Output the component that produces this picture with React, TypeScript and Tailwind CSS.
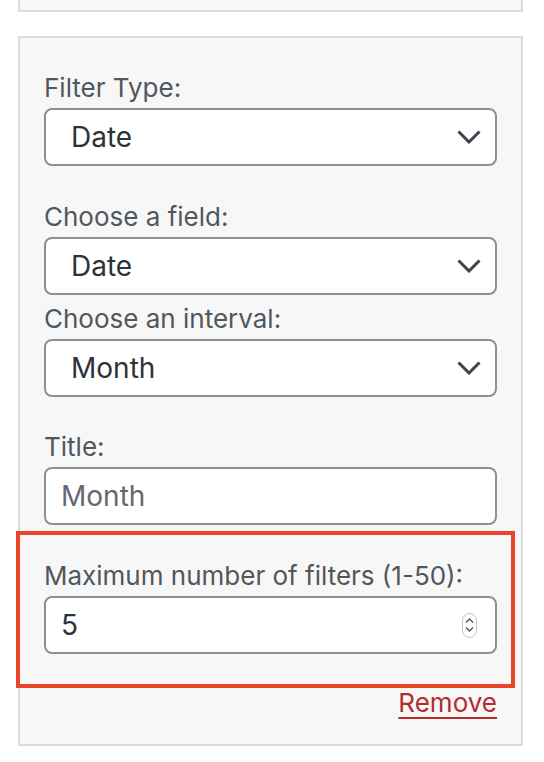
import React from "react";

function Chevron() {
  return (
    <svg width="24" height="14" viewBox="0 0 24 14" className="shrink-0">
      <path d="M1.5 1.5l10.5 10.5 10.5-10.5" fill="none" stroke="#3c434a" strokeWidth="3" />
    </svg>
  );
}

function Spinner() {
  return (
    <div className="flex h-[25px] w-[15px] flex-col items-center justify-center gap-[4px] rounded-full border border-[#c3c4c7] bg-white">
      <svg width="9" height="5" viewBox="0 0 9 5">
        <path d="M1 4.5l3.5-3.5 3.5 3.5" fill="none" stroke="#50575e" strokeWidth="1.4" />
      </svg>
      <svg width="9" height="5" viewBox="0 0 9 5">
        <path d="M1 0.5l3.5 3.5 3.5-3.5" fill="none" stroke="#50575e" strokeWidth="1.4" />
      </svg>
    </div>
  );
}

function Label({ text, className = "" }: { text: string; className?: string }) {
  return (
    <div className={`mb-[2px] h-[36px] text-[26px] leading-[36px] text-[#50575e] ${className}`}>
      {text}
    </div>
  );
}

function SelectBox({ value }: { value: string }) {
  return (
    <div className="flex h-[58px] items-center justify-between rounded-[8px] border-2 border-[#8c8f94] bg-white pl-[25px] pr-[14px] text-[28px] text-[#2c3338]">
      <span>{value}</span>
      <Chevron />
    </div>
  );
}

function TextBox({
  value,
  muted = false,
  spinner = false,
}: {
  value: string;
  muted?: boolean;
  spinner?: boolean;
}) {
  return (
    <div
      className={`flex h-[58px] items-center justify-between rounded-[8px] border-2 border-[#8c8f94] bg-white pl-[15px] pr-[18px] text-[28px] ${
        muted ? "text-[#646970]" : "text-[#2c3338]"
      }`}
    >
      <span>{value}</span>
      {spinner && <Spinner />}
    </div>
  );
}

export default function App() {
  return (
    <div className="min-h-[762px] bg-white font-['Inter','Noto_Sans',sans-serif]">
      <div className="ml-[18px] h-[12px] w-[505px] border-x-2 border-b-2 border-[#dcdcde] bg-[#f7f7f7]" />

      <div className="ml-[18px] mt-[24px] h-[710px] w-[505px] border-2 border-[#dcdcde] bg-[#f7f7f7] px-[24px] pt-[32px]">
        <Label text="Filter Type:" />
        <SelectBox value="Date" />

        <Label text="Choose a field:" className="mt-[33px]" />
        <SelectBox value="Date" />
        <Label text="Choose an interval:" className="mt-[6px]" />
        <SelectBox value="Month" />

        <Label text="Title:" className="mt-[32px]" />
        <TextBox value="Month" muted />

        <div className="-ml-[28px] -mr-[18px] mt-[6px] border-4 border-[#e8442a] pb-[30px] pl-[24px] pr-[14px] pt-[23px]">
          <Label text="Maximum number of filters (1-50):" />
          <TextBox value="5" spinner />
        </div>

        <div className="h-[30px] text-right text-[26px] leading-[30px]">
          <a
            href="#"
            className="text-[#b32d2e] underline decoration-2 underline-offset-[5px]"
          >
            Remove
          </a>
        </div>
      </div>
    </div>
  );
}
